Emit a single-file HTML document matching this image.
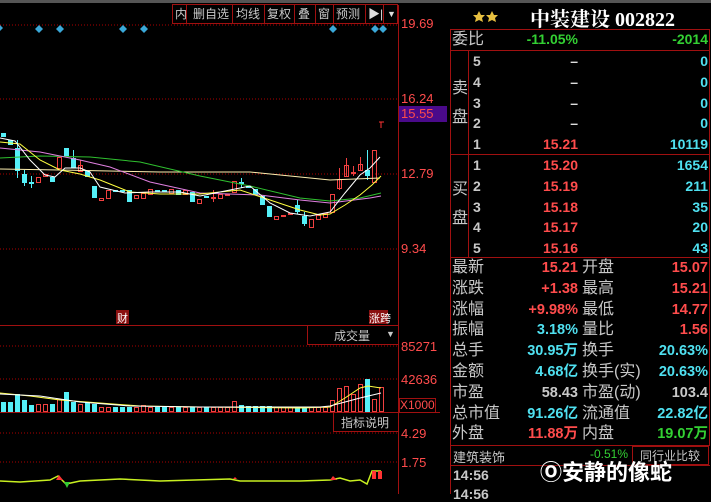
<!DOCTYPE html><html><head><meta charset="utf-8"><style>
body{margin:0;width:711px;height:494px;background:#000;overflow:hidden;position:relative;font-family:"Liberation Sans","Noto Sans CJK SC",sans-serif;}
.a{position:absolute;white-space:nowrap}
.t{font-size:14px;line-height:21px}
.r{color:#ff4c4c}.c{color:#4fe0f0}.g{color:#33d033}.w{color:#c8c8c8}
</style></head><body>
<div class="a" style="left:0;top:0;width:711px;height:3px;background:#555"></div>
<svg class="a" style="left:0;top:0" width="711" height="494">
<g stroke="#a00" stroke-dasharray="1 2" stroke-width="1">
<line x1="0" y1="25" x2="398" y2="25"/><line x1="0" y1="99" x2="398" y2="99"/><line x1="0" y1="174" x2="398" y2="174"/><line x1="0" y1="249" x2="398" y2="249"/>
<line x1="0" y1="346" x2="398" y2="346"/><line x1="0" y1="379" x2="398" y2="379"/><line x1="0" y1="433" x2="398" y2="433"/><line x1="0" y1="462" x2="398" y2="462"/>
</g>
<g stroke="#a01010" fill="none">
<line x1="398.5" y1="5" x2="398.5" y2="494"/>
<line x1="0" y1="325.5" x2="398" y2="325.5"/>
<line x1="0" y1="412.5" x2="440" y2="412.5"/>
<rect x="172.5" y="4.5" width="225" height="19"/>
<rect x="307.5" y="325.5" width="91" height="19"/>
<rect x="333.5" y="412.5" width="65" height="19"/>
<rect x="399.5" y="398.5" width="36" height="14"/>
<line x1="450.5" y1="29" x2="450.5" y2="494"/>
<rect x="450.5" y="29.5" width="259" height="416"/>
<line x1="450" y1="50.5" x2="710" y2="50.5"/>
<line x1="450" y1="154.5" x2="710" y2="154.5"/>
<line x1="450" y1="257.5" x2="710" y2="257.5"/>
<line x1="468.5" y1="50" x2="468.5" y2="258"/>
<line x1="450" y1="465.5" x2="710" y2="465.5"/>
<rect x="632.5" y="446.5" width="76" height="18"/>
</g>
<g stroke="#a01010"><line x1="186.5" y1="5" x2="186.5" y2="23"/><line x1="232.5" y1="5" x2="232.5" y2="23"/><line x1="264.5" y1="5" x2="264.5" y2="23"/><line x1="294.5" y1="5" x2="294.5" y2="23"/><line x1="315.5" y1="5" x2="315.5" y2="23"/><line x1="333.5" y1="5" x2="333.5" y2="23"/><line x1="365.5" y1="5" x2="365.5" y2="23"/><line x1="383.5" y1="5" x2="383.5" y2="23"/></g>
<rect x="399" y="106" width="48" height="16" fill="#4a0a8a"/>
<g fill="#3aa8d8">
<path d="M0 25l3 3-3 3z"/><path d="M39 25l4 4-4 4-4-4z"/><path d="M60 25l4 4-4 4-4-4z"/><path d="M123 25l4 4-4 4-4-4z"/><path d="M144 25l4 4-4 4-4-4z"/><path d="M333 25l4 4-4 4-4-4z"/><path d="M375 25l4 4-4 4-4-4z"/><path d="M383 25l4 4-4 4-4-4z"/>
</g>
<path d="M379 122h5M381 122v6" stroke="#f33" fill="none"/>
<g fill="#55f0f8">
<rect x="1" y="133" width="5" height="4"/><rect x="8" y="140" width="5" height="5"/><rect x="15" y="148" width="5" height="23"/><rect x="22" y="174" width="5" height="9"/><rect x="29" y="182" width="5" height="2"/><rect x="50" y="177" width="5" height="5"/><rect x="64" y="148" width="5" height="8"/><rect x="71" y="158" width="5" height="10"/><rect x="85" y="171" width="5" height="6"/><rect x="92" y="186" width="5" height="12"/><rect x="113" y="190" width="5" height="2"/><rect x="120" y="190" width="5" height="2"/><rect x="127" y="190" width="5" height="12"/><rect x="155" y="190" width="5" height="2"/><rect x="162" y="190" width="5" height="2"/><rect x="176" y="190" width="5" height="5"/><rect x="190" y="192" width="5" height="10"/><rect x="204" y="196" width="5" height="2"/><rect x="239" y="182" width="5" height="2"/><rect x="246" y="186" width="5" height="2"/><rect x="253" y="189" width="5" height="6"/><rect x="260" y="196" width="5" height="9"/><rect x="267" y="206" width="5" height="11"/><rect x="295" y="205" width="5" height="7"/><rect x="302" y="216" width="5" height="8"/><rect x="365" y="170" width="5" height="6"/>
</g>
<g stroke="#55f0f8"><line x1="31.5" y1="176" x2="31.5" y2="188"/><line x1="24.5" y1="170" x2="24.5" y2="186"/><line x1="17.5" y1="140" x2="17.5" y2="178"/><line x1="73.5" y1="150" x2="73.5" y2="168"/><line x1="367.5" y1="150" x2="367.5" y2="180"/><line x1="304.5" y1="212" x2="304.5" y2="226"/><line x1="297.5" y1="200" x2="297.5" y2="214"/><line x1="241.5" y1="178" x2="241.5" y2="188"/></g>
<g fill="none" stroke="#f04040">
<rect x="36.5" y="177.5" width="4" height="5"/><rect x="43.5" y="174.5" width="4" height="2"/><rect x="57.5" y="157.5" width="4" height="11"/><rect x="78.5" y="165.5" width="4" height="6"/><rect x="99.5" y="198.5" width="4" height="2"/><rect x="106.5" y="190.5" width="4" height="8"/><rect x="134.5" y="195.5" width="4" height="3"/><rect x="141.5" y="193.5" width="4" height="5"/><rect x="148.5" y="189.5" width="4" height="5"/><rect x="169.5" y="189.5" width="4" height="4"/><rect x="183.5" y="190.5" width="4" height="4"/><rect x="197.5" y="199.5" width="4" height="4"/><rect x="211.5" y="197.5" width="4" height="1"/><rect x="218.5" y="194.5" width="4" height="4"/><rect x="225.5" y="194.5" width="4" height="1"/><rect x="232.5" y="181.5" width="4" height="11"/><rect x="274.5" y="216.5" width="4" height="3"/><rect x="281.5" y="215.5" width="4" height="1"/><rect x="288.5" y="213.5" width="4" height="1"/><rect x="309.5" y="219.5" width="4" height="8"/><rect x="316.5" y="215.5" width="4" height="4"/><rect x="323.5" y="213.5" width="4" height="4"/><rect x="330.5" y="194.5" width="4" height="18"/><rect x="337.5" y="179.5" width="4" height="9"/><rect x="344.5" y="165.5" width="4" height="11"/><rect x="351.5" y="172.5" width="4" height="1"/><rect x="358.5" y="164.5" width="4" height="6"/><rect x="372.5" y="150.5" width="4" height="32"/>
<path d="M213.5 190v12M80.5 160v12M339.5 168v22M346.5 158v18M360.5 157v14M353.5 166v10"/>
</g>
<g fill="none" stroke-width="1">
<polyline stroke="#fff0b0" points="0,169 60,170 160,172 250,172 330,180 380,178"/>
<polyline stroke="#2fc02f" points="0,158 40,156 90,157 140,162 200,176 250,186 300,198 330,201 360,198 381,193"/>
<polyline stroke="#e080e0" points="0,148 40,152 80,160 110,167 150,182 200,193 260,195 300,200 330,203 370,198 381,196"/>
<polyline stroke="#ffff40" points="0,142 20,144 40,160 60,170 80,174 100,180 130,192 160,194 200,194 240,190 270,200 300,210 320,215 330,214 345,205 360,195 372,185 381,176"/>
<polyline stroke="#fff" points="0,138 15,141 30,160 45,175 55,177 65,168 80,168 90,172 100,187 125,193 150,192 180,192 200,196 230,190 250,186 270,203 290,213 310,216 330,212 345,193 360,175 370,168 380,157"/>
</g>
<g fill="#55f0f8">
<rect x="1" y="402" width="5" height="10"/><rect x="8" y="402" width="5" height="10"/><rect x="15" y="394" width="5" height="18"/><rect x="22" y="400" width="5" height="12"/><rect x="29" y="405" width="5" height="7"/><rect x="50" y="404" width="5" height="8"/><rect x="64" y="392" width="5" height="20"/><rect x="71" y="402" width="5" height="10"/><rect x="85" y="402" width="5" height="10"/><rect x="92" y="404" width="5" height="8"/><rect x="113" y="407" width="5" height="5"/><rect x="120" y="407" width="5" height="5"/><rect x="127" y="407" width="5" height="5"/><rect x="155" y="407" width="5" height="5"/><rect x="162" y="407" width="5" height="5"/><rect x="176" y="407" width="5" height="5"/><rect x="190" y="407" width="5" height="5"/><rect x="204" y="407" width="5" height="5"/><rect x="239" y="405" width="5" height="7"/><rect x="246" y="406" width="5" height="6"/><rect x="253" y="406" width="5" height="6"/><rect x="260" y="406" width="5" height="6"/><rect x="267" y="406" width="5" height="6"/><rect x="295" y="408" width="5" height="4"/><rect x="302" y="408" width="5" height="4"/><rect x="365" y="379" width="5" height="33"/>
</g>
<g fill="none" stroke="#f04040">
<rect x="36.5" y="404.5" width="4" height="7"/><rect x="43.5" y="404.5" width="4" height="7"/><rect x="57.5" y="399.5" width="4" height="12"/><rect x="78.5" y="404.5" width="4" height="7"/><rect x="99.5" y="407.5" width="4" height="4"/><rect x="106.5" y="407.5" width="4" height="4"/><rect x="134.5" y="407.5" width="4" height="4"/><rect x="141.5" y="405.5" width="4" height="6"/><rect x="148.5" y="407.5" width="4" height="4"/><rect x="169.5" y="407.5" width="4" height="4"/><rect x="183.5" y="407.5" width="4" height="4"/><rect x="197.5" y="407.5" width="4" height="4"/><rect x="211.5" y="407.5" width="4" height="4"/><rect x="218.5" y="407.5" width="4" height="4"/><rect x="225.5" y="407.5" width="4" height="4"/><rect x="232.5" y="401.5" width="4" height="10"/><rect x="274.5" y="407.5" width="4" height="4"/><rect x="281.5" y="407.5" width="4" height="4"/><rect x="288.5" y="407.5" width="4" height="4"/><rect x="309.5" y="407.5" width="4" height="4"/><rect x="316.5" y="407.5" width="4" height="4"/><rect x="323.5" y="407.5" width="4" height="4"/><rect x="330.5" y="400.5" width="4" height="11"/><rect x="337.5" y="388.5" width="4" height="23"/><rect x="344.5" y="386.5" width="4" height="25"/><rect x="351.5" y="394.5" width="4" height="17"/><rect x="358.5" y="384.5" width="4" height="27"/><rect x="372.5" y="399.5" width="4" height="12"/><rect x="379.5" y="387.5" width="4" height="24"/>
</g>
<polyline fill="none" stroke="#ffff40" points="0,393 30,396 60,400 100,403 140,406 200,407 300,408 330,407 345,398 360,388 368,386 381,388"/>
<polyline fill="none" stroke="#fff" points="0,394 40,396 80,402 130,406 200,407 320,407 330,406 345,402 360,398 381,393"/>
<polyline fill="none" stroke="#c8f020" stroke-width="1.5" points="0,481 20,482 50,480 58,476 66,484 80,481 100,480 120,479 160,481 230,479 240,481 300,481 330,480 340,478 350,481 360,480 367,484 372,471 381,471"/>
<path d="M56 480l3-5 4 5zM330 480l3-4 4 4zM233 479l2-2 2 2z" fill="#f33"/>
<path d="M64 482l3 6 3-6z" fill="#3c3"/>
<rect x="372" y="471" width="4" height="8" fill="#f33"/><rect x="378" y="471" width="4" height="8" fill="#f33"/>
<rect x="116" y="310" width="13" height="14" fill="#8a1010"/>
<rect x="369" y="310" width="19" height="14" fill="#8a1010"/>
<path d="M479 11l2 4 4 0-3 3 1 4-4-2-4 2 1-4-3-3 4 0z M492 11l2 4 4 0-3 3 1 4-4-2-4 2 1-4-3-3 4 0z" fill="#e8c040"/>
</svg>
<div class="a w" style="top:5px;left:175px;font-size:12px;line-height:18px">内</div>
<div class="a w" style="left:193px;top:5px;font-size:12px;line-height:18px">删自选</div>
<div class="a w" style="left:236px;top:5px;font-size:12px;line-height:18px">均线</div>
<div class="a w" style="left:267px;top:5px;font-size:12px;line-height:18px">复权</div>
<div class="a w" style="left:298px;top:5px;font-size:12px;line-height:18px">叠</div>
<div class="a w" style="left:318px;top:5px;font-size:12px;line-height:18px">窗</div>
<div class="a w" style="left:336px;top:5px;font-size:12px;line-height:18px">预测</div>
<div class="a" style="left:368px;top:5px;font-size:12px;line-height:18px;color:#ddd">▶|</div>
<div class="a" style="left:387px;top:5px;font-size:9px;line-height:18px;color:#ddd">▼</div>
<div class="a r" style="left:401px;top:16px;font-size:13px">19.69</div>
<div class="a r" style="left:401px;top:91px;font-size:13px">16.24</div>
<div class="a r" style="left:401px;top:106px;font-size:13px">15.55</div>
<div class="a r" style="left:401px;top:166px;font-size:13px">12.79</div>
<div class="a r" style="left:401px;top:241px;font-size:13px">9.34</div>
<div class="a r" style="left:401px;top:339px;font-size:13px">85271</div>
<div class="a r" style="left:401px;top:372px;font-size:13px">42636</div>
<div class="a r" style="left:400px;top:398px;font-size:12px">X1000</div>
<div class="a r" style="left:401px;top:426px;font-size:13px">4.29</div>
<div class="a r" style="left:401px;top:455px;font-size:13px">1.75</div>
<div class="a w" style="left:334px;top:327px;font-size:12px">成交量</div>
<div class="a w" style="left:386px;top:329px;font-size:9px">▼</div>
<div class="a w" style="left:341px;top:414px;font-size:12px">指标说明</div>
<div class="a" style="left:117px;top:310px;font-size:11px;color:#fff">财</div>
<div class="a" style="left:369px;top:310px;font-size:11px;color:#fff">涨跨</div>
<div class="a" style="left:530px;top:3px;font-size:20px;font-weight:bold;color:#fff;font-family:'Liberation Serif','Noto Serif CJK SC',serif">中装建设 002822</div>
<div class="a t w" style="left:452px;top:29px;font-size:16px">委比</div>
<div class="a t g" style="left:480px;top:29px;width:98px;text-align:right;font-weight:bold">-11.05%</div>
<div class="a t g" style="left:610px;top:29px;width:98px;text-align:right;font-weight:bold">-2014</div>
<div class="a w" style="left:452px;top:74px;font-size:16px;line-height:29px">卖<br>盘</div>
<div class="a w" style="left:452px;top:175px;font-size:16px;line-height:29px">买<br>盘</div>
<div class="a t w" style="left:473px;top:51px;line-height:20.8px;font-weight:bold">5<br>4<br>3<br>2<br>1<br>1<br>2<br>3<br>4<br>5</div>
<div class="a t" style="left:480px;top:51px;width:98px;text-align:right;line-height:20.8px;font-weight:bold;color:#ddd">–<br>–<br>–<br>–<br><span class="r">15.21<br>15.20<br>15.19<br>15.18<br>15.17<br>15.16</span></div>
<div class="a t c" style="left:600px;top:51px;width:108px;text-align:right;line-height:20.8px;font-weight:bold">0<br>0<br>0<br>0<br>10119<br>1654<br>211<br>35<br>20<br>43</div>
<div class="a w" style="left:452px;top:258px;font-size:16px;line-height:20.8px">最新<br>涨跌<br>涨幅<br>振幅<br>总手<br>金额<br>市盈<br>总市值<br>外盘</div>
<div class="a w" style="left:582px;top:258px;font-size:16px;line-height:20.8px">开盘<br>最高<br>最低<br>量比<br>换手<br>换手(实)<br>市盈(动)<br>流通值<br>内盘</div>
<div class="a" style="left:480px;top:258px;width:98px;text-align:right;font-size:14.5px;line-height:20.8px;font-weight:bold"><span class="r">15.21<br>+1.38<br>+9.98%</span><br><span class="c">3.18%<br>30.95万<br>4.68亿</span><br><span class="w">58.43</span><br><span class="c">91.26亿</span><br><span class="r">11.88万</span></div>
<div class="a" style="left:600px;top:258px;width:108px;text-align:right;font-size:14.5px;line-height:20.8px;font-weight:bold"><span class="r">15.07<br>15.21<br>14.77<br>1.56</span><br><span class="c">20.63%<br>20.63%</span><br><span class="w">103.4</span><br><span class="c">22.82亿</span><br><span class="g">19.07万</span></div>
<div class="a w" style="left:453px;top:447px;font-size:13px">建筑装饰</div>
<div class="a g" style="left:583px;top:447px;font-size:12px;width:45px;text-align:right">-0.51%</div>
<div class="a w" style="left:640px;top:447px;font-size:12px">同行业比较</div>
<div class="a w" style="left:453px;top:467px;font-size:14px;font-weight:bold">14:56</div>
<div class="a w" style="left:453px;top:486px;font-size:14px;font-weight:bold">14:56</div>
<div class="a" style="left:540px;top:455px;font-size:22px;color:#fff;font-weight:bold;text-shadow:0 0 2px #000">Ⓞ安静的像蛇</div>
</body></html>
